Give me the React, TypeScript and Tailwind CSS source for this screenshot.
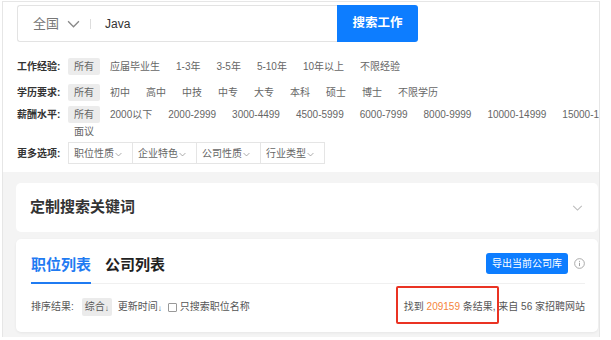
import React from 'react';

const font = { fontFamily: '"Liberation Sans", "Noto Sans CJK SC", sans-serif' };

const experience = ['所有', '应届毕业生', '1-3年', '3-5年', '5-10年', '10年以上', '不限经验'];
const education = ['所有', '初中', '高中', '中技', '中专', '大专', '本科', '硕士', '博士', '不限学历'];
const salary = [
	'所有',
	'2000以下',
	'2000-2999',
	'3000-4499',
	'4500-5999',
	'6000-7999',
	'8000-9999',
	'10000-14999',
	'15000-19999',
	'面议',
];
const more = ['职位性质', '企业特色', '公司性质', '行业类型'];

function Chevron({ className }: { className?: string }) {
	return (
		<svg className={className} viewBox="0 0 12 7" fill="none">
			<path d="M1 1l5 5 5-5" stroke="currentColor" strokeWidth="1.2" />
		</svg>
	);
}

function FilterRow({ label, items, className }: { label: string; items: string[]; className?: string }) {
	return (
		<div className={`flex items-start ${className ?? ''}`}>
			<div className="w-[51px] shrink-0 h-[17px] leading-[17px] text-[10px] font-bold text-[#333]">
				{label}
			</div>
			<div className="flex flex-wrap gap-x-[4px] w-[575px] shrink-0">
				{items.map((item, i) => (
					<span
						key={item}
						className={`px-[6px] h-[17px] leading-[17px] text-[10px] whitespace-nowrap rounded-[2px] text-[#666] ${
							i === 0 ? 'bg-[#ececec]' : ''
						}`}
					>
						{item}
					</span>
				))}
			</div>
		</div>
	);
}

export default function App() {
	return (
		<div className="w-[611px] h-[340px] bg-white overflow-hidden" style={font}>
			<div className="ml-[2px] mt-[1px] w-[598px] h-[336px] border border-b-0 border-[#e6e6e6] bg-[#f4f4f4] overflow-hidden flex flex-col">
				{/* search + filters */}
				<div className="bg-white h-[170px] pl-[14px] pt-[3px] shrink-0">
					<div className="flex h-[37px]">
						<div className="w-[320px] flex items-center border border-[#e3e3e3] border-r-0 rounded-l-[3px] pl-[15px]">
							<span className="text-[13px] text-[#777]">全国</span>
							<Chevron className="w-[13px] h-[8px] ml-[8px] text-[#888]" />
							<span className="w-px h-[10px] bg-[#ddd] ml-[10px]" />
							<span className="ml-[14px] text-[12px] text-[#333]">Java</span>
						</div>
						<button className="w-[81px] bg-[#0d7dff] text-white text-[12.5px] font-bold rounded-r-[3px]">
							搜索工作
						</button>
					</div>

					<FilterRow label="工作经验:" items={experience} className="mt-[16px]" />
					<FilterRow label="学历要求:" items={education} className="mt-[9px]" />
					<FilterRow label="薪酬水平:" items={salary} className="mt-[5px]" />

					<div className="flex items-center mt-[2px]">
						<div className="w-[51px] shrink-0 text-[10px] font-bold text-[#333]">更多选项:</div>
						<div className="flex">
							{more.map((m, i) => (
								<div
									key={m}
									className={`h-[22px] w-[65px] flex items-center pl-[5px] border border-[#e5e5e5] text-[10px] text-[#666] ${
										i > 0 ? '-ml-px' : ''
									}`}
								>
									{m}
									<Chevron className="w-[7px] h-[5px] ml-[1px] mt-[3px] text-[#888]" />
								</div>
							))}
						</div>
					</div>
				</div>

				{/* cards */}
				<div className="ml-[13px] mr-[1px] mt-[11px] flex flex-col gap-[7px]">
					<div className="h-[49px] bg-white rounded-[5px] flex items-center justify-between pl-[14px] pr-[15px]">
						<span className="text-[15px] font-bold text-[#333]">定制搜索关键词</span>
						<Chevron className="w-[11px] h-[6px] text-[#bbb]" />
					</div>

					<div className="h-[93px] bg-white rounded-[5px] shadow-[0_1px_3px_rgba(0,0,0,0.06)] pl-[15px] pr-[13px]">
						<div className="h-[45px] flex justify-between border-b border-[#f0f0f0]">
							<div className="flex items-end gap-[14px]">
								<div className="pb-[9px] -mb-px border-b-2 border-[#1f7bf2] text-[15px] leading-[16px] font-bold text-[#1f7bf2]">
									职位列表
								</div>
								<div className="pb-[9px] -mb-px border-b-2 border-transparent text-[15px] leading-[16px] font-bold text-[#222]">
									公司列表
								</div>
							</div>
							<div className="flex items-start pt-[14px]">
								<button className="h-[21px] px-[6px] bg-[#0d7dff] text-white text-[10px] rounded-[3px]">
									导出当前公司库
								</button>
								<svg className="w-[11px] h-[11px] ml-[6px] mt-[5px]" viewBox="0 0 12 12" fill="none">
									<circle cx="6" cy="6" r="5.3" stroke="#999" strokeWidth="0.9" />
									<path d="M6 5.2v3.6" stroke="#999" strokeWidth="1" />
									<circle cx="6" cy="3.6" r="0.6" fill="#999" />
								</svg>
							</div>
						</div>

						<div className="flex items-center justify-between mt-[14px] h-[18px] text-[10px] leading-[14px] text-[#555]">
							<div className="flex items-center">
								<span>排序结果:</span>
								<span className="ml-[8px] h-[18px] px-[3px] flex items-center bg-[#ebebeb] rounded-[2px]">
									综合<span className="text-[8px] mt-[3px]">↓</span>
								</span>
								<span className="ml-[6px] flex items-center">
									更新时间<span className="text-[8px] mt-[3px]">↓</span>
								</span>
								<span className="ml-[6px] w-[9px] h-[9px] border border-[#999] rounded-[1px]" />
								<span className="ml-[3px]">只搜索职位名称</span>
							</div>
							<div className="whitespace-nowrap">
								<span className="relative">
									找到 <span className="text-[#f5843c]">209159</span> 条结果
									<span className="absolute -left-[8px] -right-[6px] -top-[15px] -bottom-[12px] border-2 border-[#ea3323] rounded-[2px]" />
								</span>
								, 来自 56 家招聘网站
							</div>
						</div>
					</div>
				</div>
			</div>
		</div>
	);
}
